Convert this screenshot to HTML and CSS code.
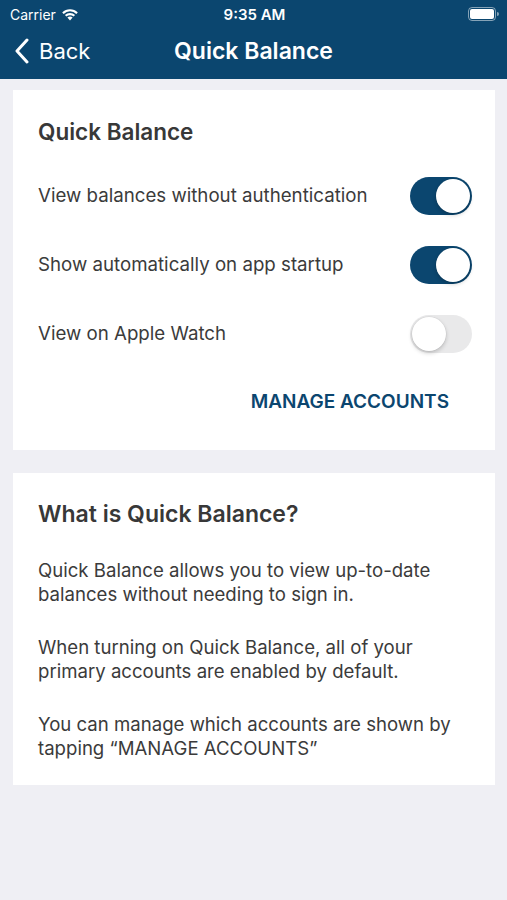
FILE: index.html
```html
<!DOCTYPE html>
<html lang="en">
<head>
    <meta charset="UTF-8">
    <meta name="viewport" content="width=device-width, initial-scale=1.0">
    <title>Quick Balance</title>
    <link rel="stylesheet" href="styles.css">
</head>
<body>
    <header class="topbar">
        <div class="status-bar">
            <div class="status-left">
                <span>Carrier</span>
                <svg class="wifi" width="18" height="13" viewBox="0 0 18 13">
                    <path d="M9 12.5 L6.4 9.6 A3.8 3.8 0 0 1 11.6 9.6 Z" fill="#fff"/>
                    <path d="M3.9 7.1 A7.4 7.4 0 0 1 14.1 7.1 L12.6 8.6 A5.3 5.3 0 0 0 5.4 8.6 Z" fill="#fff"/>
                    <path d="M1.2 4.4 A11.2 11.2 0 0 1 16.8 4.4 L15.3 5.9 A9.1 9.1 0 0 0 2.7 5.9 Z" fill="#fff"/>
                </svg>
            </div>
            <div class="status-time">9:35 AM</div>
            <div class="status-right">
                <span class="battery"><span class="battery-level"></span></span>
                <span class="battery-tip"></span>
            </div>
        </div>
        <nav class="navbar">
            <a class="back" href="#">
                <svg width="16" height="26" viewBox="0 0 16 26">
                    <path d="M13 2 L3 13 L13 24" fill="none" stroke="#fff" stroke-width="3" stroke-linecap="round" stroke-linejoin="round"/>
                </svg>
                <span>Back</span>
            </a>
            <h1 class="nav-title">Quick Balance</h1>
        </nav>
    </header>

    <main class="content">
        <section class="card settings">
            <h2>Quick Balance</h2>
            <div class="row">
                <span>View balances without authentication</span>
                <span class="switch on"><span class="knob"></span></span>
            </div>
            <div class="row">
                <span>Show automatically on app startup</span>
                <span class="switch on"><span class="knob"></span></span>
            </div>
            <div class="row">
                <span>View on Apple Watch</span>
                <span class="switch"><span class="knob"></span></span>
            </div>
            <div class="actions">
                <a class="link-button" href="#">MANAGE ACCOUNTS</a>
            </div>
        </section>

        <section class="card info">
            <h2>What is Quick Balance?</h2>
            <p>Quick Balance allows you to view up-to-date balances without needing to sign in.</p>
            <p>When turning on Quick Balance, all of your primary accounts are enabled by default.</p>
            <p>You can manage which accounts are shown by tapping “MANAGE ACCOUNTS”</p>
        </section>
    </main>
</body>
</html>
```

FILE: styles.css
```css
body {
    margin: 0;
    padding: 0;
    background: #efeff4;
    font-family: 'Inter', 'Liberation Sans', sans-serif;
    color: #3b3b3b;
    height: 900px;
}

.topbar {
    background: #0b466f;
    color: #fff;
}

.status-bar {
    height: 28px;
    display: flex;
    align-items: center;
    justify-content: space-between;
    padding: 0 8px 0 10px;
    font-size: 14px;
}

.status-left {
    display: flex;
    align-items: center;
    gap: 5px;
    width: 120px;
}

.status-time {
    font-weight: 600;
    font-size: 15px;
}

.status-right {
    width: 120px;
    display: flex;
    justify-content: flex-end;
    align-items: center;
}

.battery {
    width: 24px;
    height: 10px;
    border: 1px solid rgba(255, 255, 255, 0.5);
    border-radius: 4px;
    padding: 1px;
    display: flex;
}

.battery-level {
    flex: 1;
    background: #fff;
    border-radius: 2px;
}

.battery-tip {
    width: 2px;
    height: 4px;
    background: rgba(255, 255, 255, 0.5);
    border-radius: 0 2px 2px 0;
    margin-left: 1px;
}

.navbar {
    height: 45px;
    padding-bottom: 6px;
    display: flex;
    align-items: center;
    position: relative;
}

.back {
    display: flex;
    align-items: center;
    gap: 9px;
    padding-left: 14px;
    color: #fff;
    text-decoration: none;
    font-size: 22px;
}

.nav-title {
    position: absolute;
    left: 0;
    right: 0;
    margin: 0;
    text-align: center;
    font-size: 23px;
    font-weight: 600;
    pointer-events: none;
}

.content {
    padding: 11px 12px 0 13px;
    display: flex;
    flex-direction: column;
    gap: 23px;
}

.card {
    background: #fff;
    padding: 0 25px;
}

.card h2 {
    margin: 0;
    font-size: 22.5px;
    font-weight: 600;
    color: #383838;
}

.settings {
    padding-top: 28px;
}

.settings h2 {
    margin-bottom: 16px;
}

.row {
    display: flex;
    align-items: center;
    justify-content: space-between;
    height: 69px;
    font-size: 18.7px;
}

.switch {
    width: 62px;
    height: 38px;
    border-radius: 19px;
    background: #e9e9ea;
    display: flex;
    align-items: center;
    padding: 2px;
    box-sizing: border-box;
    margin-right: -2px;
}

.switch .knob {
    width: 34px;
    height: 34px;
    border-radius: 50%;
    background: #fff;
    box-shadow: 0 2px 4px rgba(0, 0, 0, 0.2), 0 0 0 0.5px rgba(0, 0, 0, 0.06);
}

.switch.on {
    background: #0b466f;
    justify-content: flex-end;
}

.actions {
    display: flex;
    justify-content: flex-end;
    padding: 22px 21px 37px 0;
}

.link-button {
    color: #0b466f;
    text-decoration: none;
    font-weight: 600;
    font-size: 19px;
}

.info {
    padding-top: 27px;
    padding-bottom: 25px;
}

.info h2 {
    font-size: 23px;
    margin-bottom: 30px;
}

.info p {
    margin: 0 0 29px;
    font-size: 18.6px;
    line-height: 24px;
}

.info p:last-child {
    margin-bottom: 0;
}
```
